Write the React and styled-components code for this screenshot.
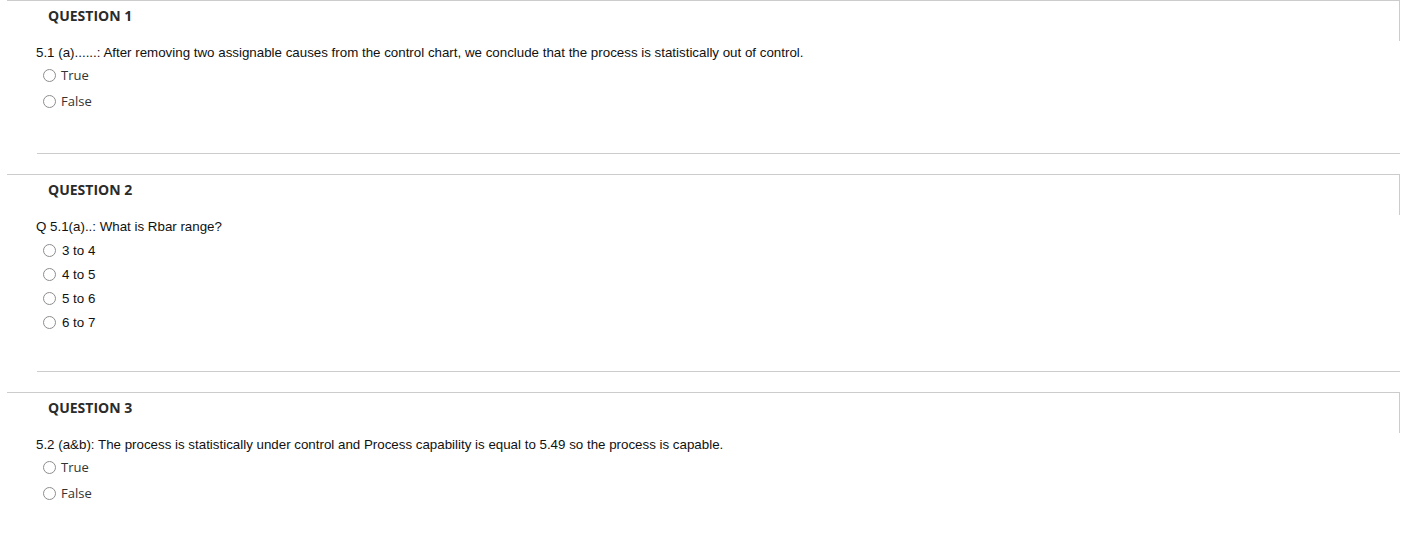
import React from "react";
import styled, { createGlobalStyle } from "styled-components";

const GlobalStyle = createGlobalStyle`
  body {
    margin: 0;
    background: #fff;
    font-family: "Liberation Sans", Arial, sans-serif;
  }
`;

const QUESTIONS = [
  {
    title: "QUESTION 1",
    text: "5.1 (a)......: After removing two assignable causes from the control chart, we conclude that the process is statistically out of control.",
    options: ["True", "False"],
    tall: true,
  },
  {
    title: "QUESTION 2",
    text: "Q 5.1(a)..: What is Rbar range?",
    options: ["3 to 4", "4 to 5", "5 to 6", "6 to 7"],
    tall: false,
  },
  {
    title: "QUESTION 3",
    text: "5.2 (a&b): The process is statistically under control and Process capability is equal to 5.49 so the process is capable.",
    options: ["True", "False"],
    tall: true,
  },
];

const Page = styled.div`
  width: 1393px;
  padding-left: 7px;
`;

const Block = styled.section`
  display: flex;
  flex-direction: column;
`;

const Header = styled.div`
  border-top: 1px solid #cccccc;
  border-right: 1px solid #cccccc;
  display: flex;
  align-items: flex-start;
  padding: 6px 0 0 41px;
  box-sizing: border-box;
  height: 41px;
  font-family: "Open Sans", sans-serif;
  font-weight: 700;
  font-size: 14px;
  line-height: 18px;
  color: #2b2b2b;
`;

const Body = styled.div`
  padding: 3px 0 0 29px;
  padding-bottom: ${p => (p.$tall ? 39 : 37)}px;
`;

const Prompt = styled.p`
  margin: 0;
  font-size: 13.33px;
  line-height: 17px;
  color: #111;
`;

const Options = styled.ul`
  list-style: none;
  margin: ${p => (p.$tall ? 1 : 3)}px 0 0;
  padding: 0;
`;

const Option = styled.li`
  display: flex;
  align-items: center;
  height: ${p => (p.$tall ? 26 : 24)}px;
  padding-left: 7px;
  gap: ${p => (p.$tall ? 5 : 6)}px;
`;

const Radio = styled.span`
  width: 13px;
  height: 13px;
  box-sizing: border-box;
  border: 1px solid #8d8d8d;
  border-radius: 50%;
  background: #fff;
  flex: none;
`;

const Label = styled.span`
  font-size: ${p => (p.$tall ? "13px" : "13.33px")};
  font-family: ${p => (p.$tall ? '"Open Sans", sans-serif' : '"Liberation Sans", Arial, sans-serif')};
  color: ${p => (p.$tall ? "#333" : "#111")};
`;

const Divider = styled.hr`
  margin: 0 0 20px 30px;
  border: none;
  border-top: 1px solid #cccccc;
  height: 0;
`;

function App() {
  return (
    <>
      <GlobalStyle />
      <Page>
        {QUESTIONS.map((q, i) => (
          <Block key={q.title}>
            <Header>{q.title}</Header>
            <Body $tall={q.tall}>
              <Prompt>{q.text}</Prompt>
              <Options $tall={q.tall}>
                {q.options.map(opt => (
                  <Option key={opt} $tall={q.tall}>
                    <Radio />
                    <Label $tall={q.tall}>{opt}</Label>
                  </Option>
                ))}
              </Options>
            </Body>
            {i < QUESTIONS.length - 1 && <Divider />}
          </Block>
        ))}
      </Page>
    </>
  );
}

export default App;
